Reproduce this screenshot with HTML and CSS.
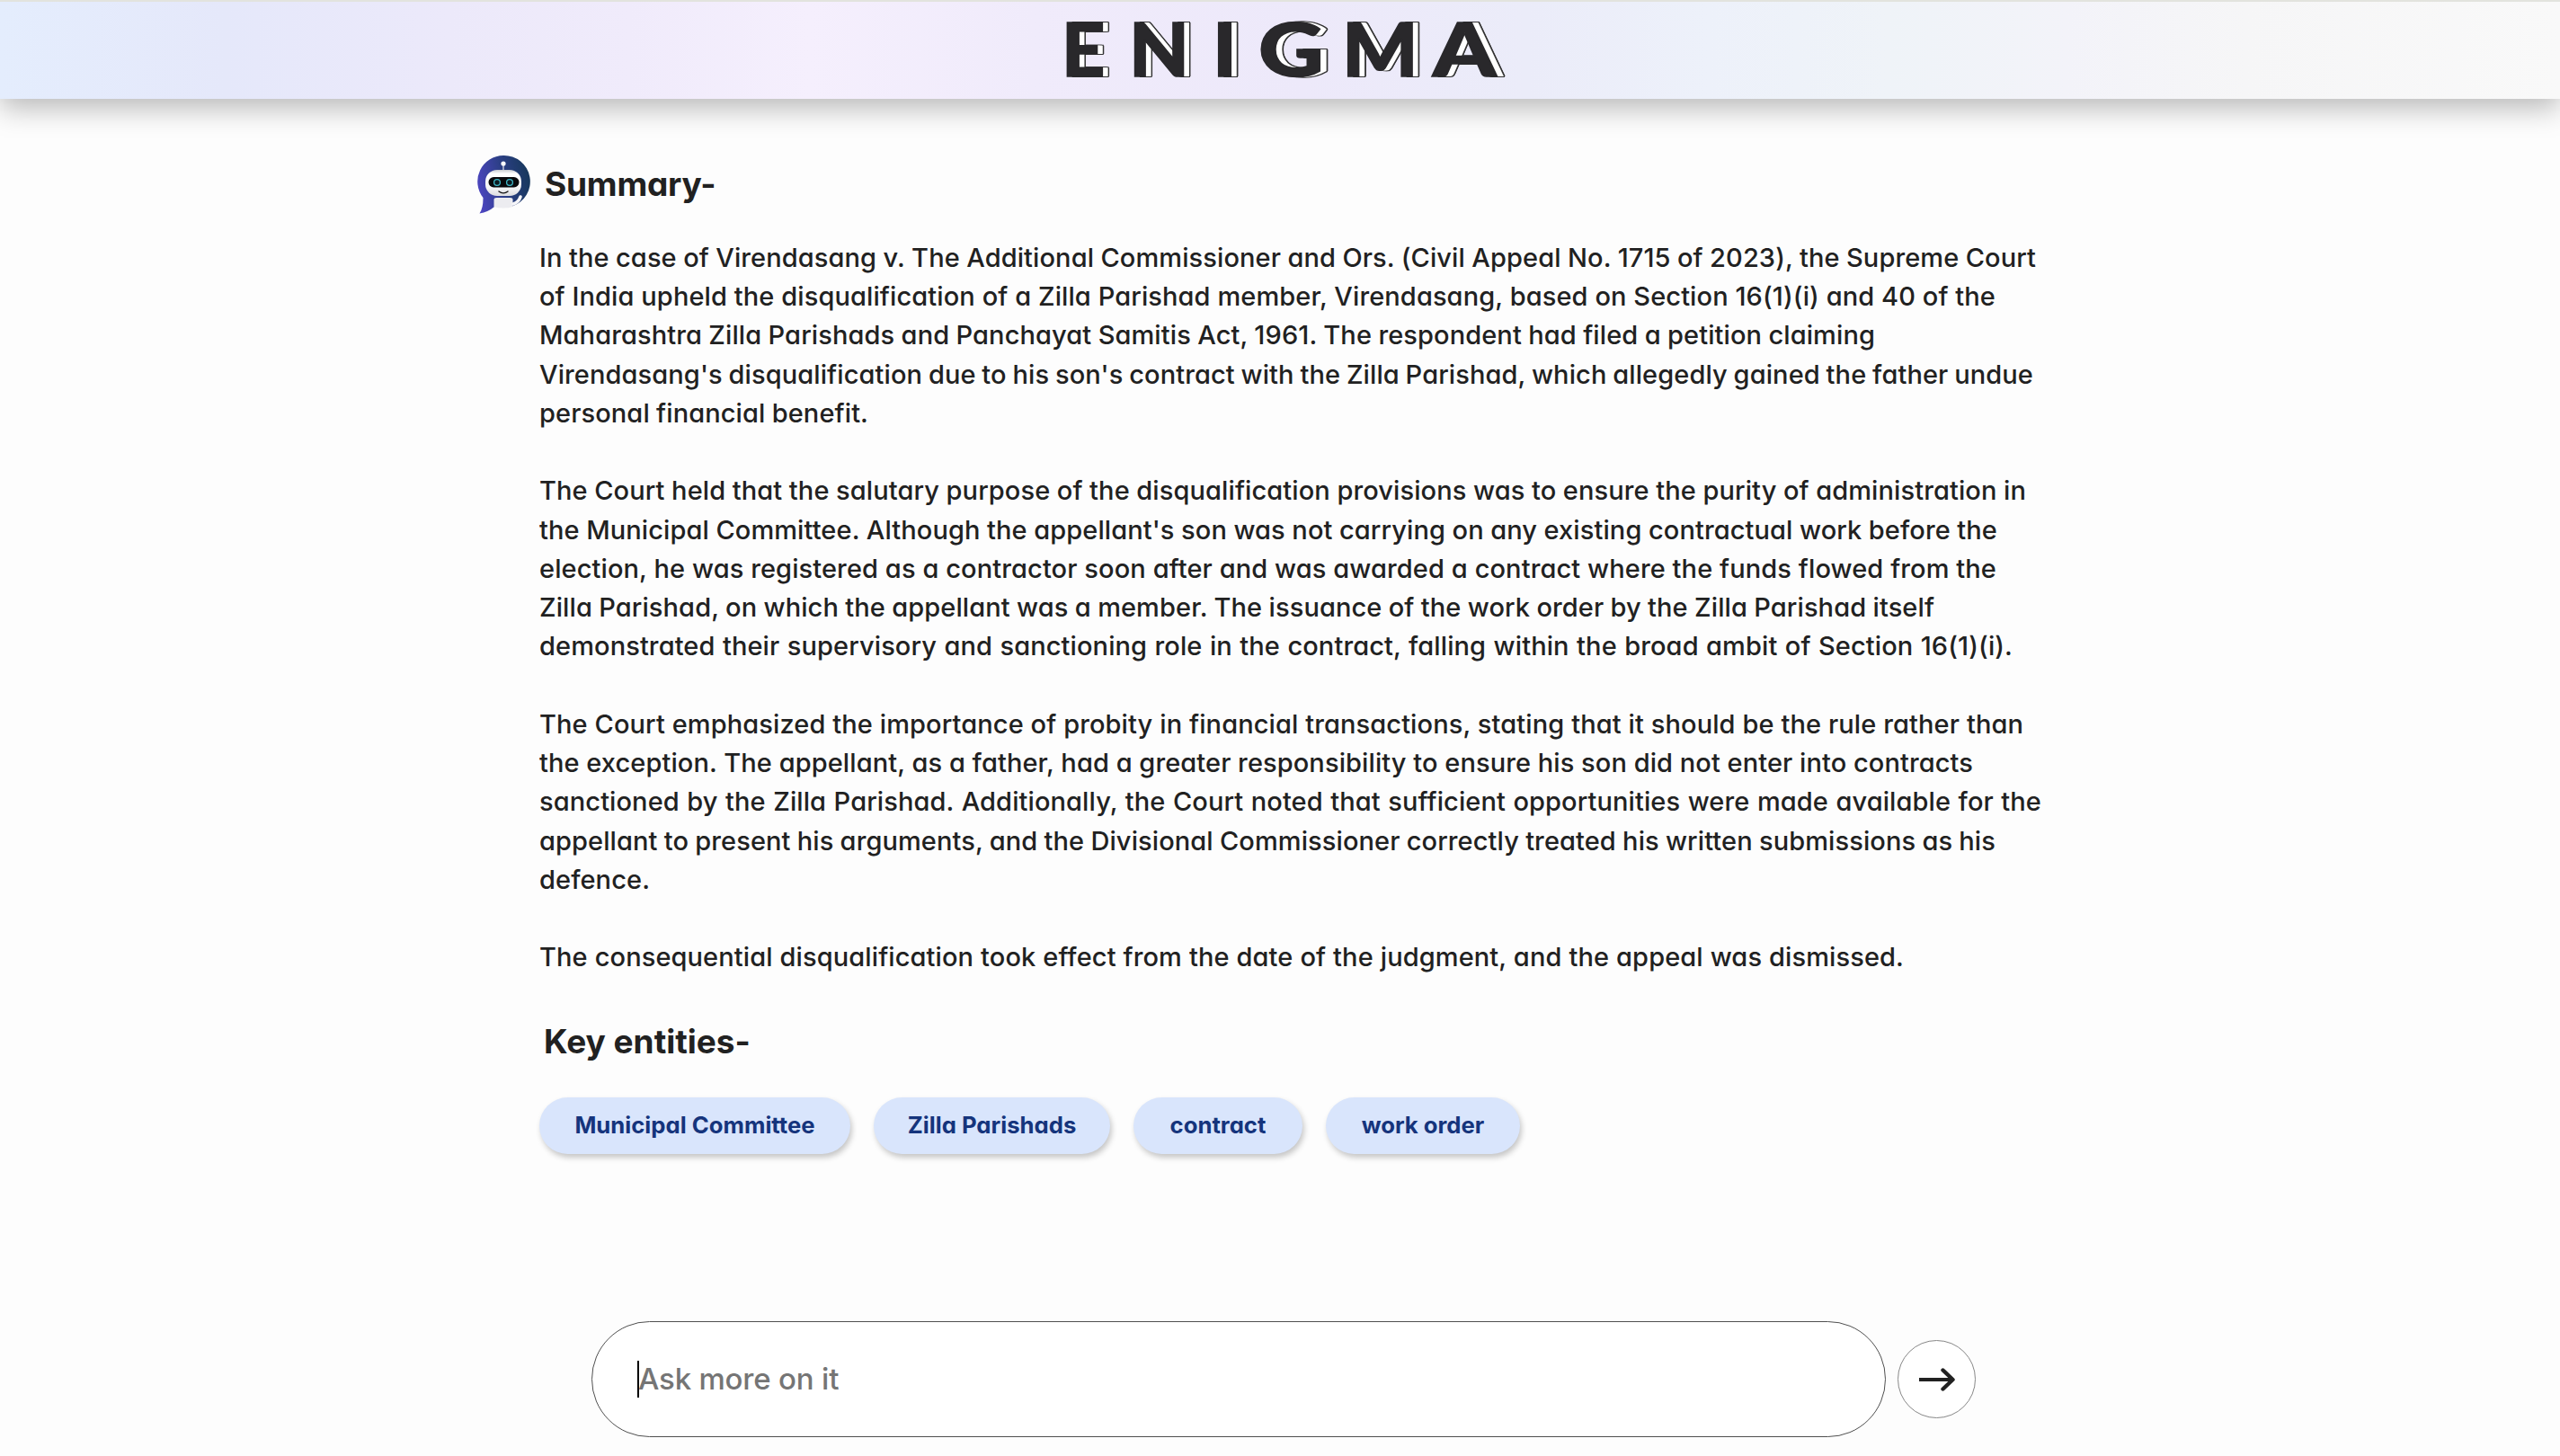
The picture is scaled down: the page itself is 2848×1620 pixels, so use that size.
FILE: index.html
```html
<!DOCTYPE html>
<html lang="en">
<head>
<meta charset="utf-8">
<title>Enigma</title>
<link rel="stylesheet" href="styles.css">
</head>
<body>
<header class="topbar">
  <div class="logo"><span class="l e">E</span><span class="l n">N</span><span class="l i">I</span><span class="l g">G</span><span class="l m">M</span><span class="l a">A</span></div>
</header>
<main class="answer">
  <div class="title-row">
    <svg class="bot" viewBox="0 0 60 66">
      <defs><linearGradient id="bubble" x1="0" x2="1" y1=".6" y2=".4"><stop offset="0" stop-color="#4c45c0"/><stop offset=".5" stop-color="#2c3f86"/><stop offset="1" stop-color="#17385c"/></linearGradient>
      <linearGradient id="face" x1="0" x2="0" y1="0" y2="1"><stop offset="0" stop-color="#c9cbd0"/><stop offset=".15" stop-color="#fff"/><stop offset=".7" stop-color="#f4f4f6"/><stop offset="1" stop-color="#dcdce0"/></linearGradient></defs>
      <path fill="url(#bubble)" d="M30 1a29 29 0 0 1 10 56.500Q32 58 20 58Q13 64 3.500 65.500Q7.500 60 7.500 48A29 29 0 0 1 30 1Z"/>
      <path stroke="#e8e8ee" stroke-width="1.200" d="M30 10v8"/><circle cx="30" cy="10" r="2.600" fill="#fff"/>
      <rect x="10" y="17" width="40" height="29" rx="13" fill="url(#face)"/>
      <rect x="13.500" y="25" width="34" height="11.500" rx="5.700" fill="#08090c"/>
      <g fill="#0b1a20" stroke="#3fb6c6" stroke-width="1.300"><circle cx="23" cy="31" r="3.400"/><circle cx="37" cy="31" r="3.400"/></g>
      <path d="M25 41q5 3.800 10 0" fill="none" stroke="#111" stroke-width="1.400" stroke-linecap="round"/>
      <path fill="#ececf0" d="M19.500 58V50q0-2 3-2h15q3 0 3 2v8q-4 1.500-10.500 1.500T19.500 58Z"/>
      <path d="M41 55q6-2 8-8" fill="none" stroke="#f5f5f8" stroke-width="3.600" stroke-linecap="round"/>
    </svg>
    <h1 class="heading">Summary-</h1>
  </div>
  <p class="para">
    <span class="line" style="--w:1665px">In the case of Virendasang v. The Additional Commissioner and Ors. (Civil Appeal No. 1715 of 2023), the Supreme Court</span>
    <span class="line" style="--w:1620px">of India upheld the disqualification of a Zilla Parishad member, Virendasang, based on Section 16(1)(i) and 40 of the</span>
    <span class="line" style="--w:1486px">Maharashtra Zilla Parishads and Panchayat Samitis Act, 1961. The respondent had filed a petition claiming</span>
    <span class="line" style="--w:1662px">Virendasang's disqualification due to his son's contract with the Zilla Parishad, which allegedly gained the father undue</span>
    <span class="line" style="--w:366px">personal financial benefit.</span>
  </p>
  <p class="para">
    <span class="line" style="--w:1654px">The Court held that the salutary purpose of the disqualification provisions was to ensure the purity of administration in</span>
    <span class="line" style="--w:1622px">the Municipal Committee. Although the appellant's son was not carrying on any existing contractual work before the</span>
    <span class="line" style="--w:1621px">election, he was registered as a contractor soon after and was awarded a contract where the funds flowed from the</span>
    <span class="line" style="--w:1552px">Zilla Parishad, on which the appellant was a member. The issuance of the work order by the Zilla Parishad itself</span>
    <span class="line" style="--w:1639px">demonstrated their supervisory and sanctioning role in the contract, falling within the broad ambit of Section 16(1)(i).</span>
  </p>
  <p class="para">
    <span class="line" style="--w:1651px">The Court emphasized the importance of probity in financial transactions, stating that it should be the rule rather than</span>
    <span class="line" style="--w:1595px">the exception. The appellant, as a father, had a greater responsibility to ensure his son did not enter into contracts</span>
    <span class="line" style="--w:1671px">sanctioned by the Zilla Parishad. Additionally, the Court noted that sufficient opportunities were made available for the</span>
    <span class="line" style="--w:1620px">appellant to present his arguments, and the Divisional Commissioner correctly treated his written submissions as his</span>
    <span class="line" style="--w:122px">defence.</span>
  </p>
  <p class="para">
    <span class="line" style="--w:1518px">The consequential disqualification took effect from the date of the judgment, and the appeal was dismissed.</span>
  </p>
  <h2 class="heading entities-title">Key entities-</h2>
  <div class="chips">
    <span class="chip c1">Municipal Committee</span>
    <span class="chip c2">Zilla Parishads</span>
    <span class="chip c3">contract</span>
    <span class="chip c4">work order</span>
  </div>
</main>
<footer class="ask">
  <div class="field"><i class="caret"></i><span class="placeholder">Ask more on it</span></div>
  <button class="send" aria-label="Send"><svg viewBox="0 0 42 28"><path d="M1 14H39" stroke="#212121" stroke-width="4"/><path d="M27.500 3.500L38.500 14L27.500 24.500" fill="none" stroke="#212121" stroke-width="4.400" stroke-linecap="round" stroke-linejoin="round"/></svg></button>
</footer>
</body>
</html>
```

FILE: styles.css
```css
* { box-sizing: border-box; }
body { margin: 0; height: 1620px; overflow: hidden; background: #fdfdfd; color: #212121; font-family: Inter, "Liberation Sans", sans-serif; font-feature-settings: "cv11"; display: flex; flex-direction: column; }
.topbar { height: 110px; flex: none; border-top: 2px solid #e2e3de; background: linear-gradient(90deg, #e4edfd 0, #e5e8fa 250px, #ece9fa 500px, #f0ebfb 700px, #f5effd 900px, #f0ebfb 1150px, #ede9fa 1450px, #ebecf9 1700px, #edf1fa 1900px, #eff3f8 2100px, #f3f3f9 2300px, #f6f6f7 2500px, #f9f9f9 2848px); box-shadow: 0 10px 30px rgba(0,0,0,.28); }
.logo { height: 104px; padding-left: 1181px; display: flex; font: 900 81px/104px Lato, sans-serif; color: #29282b; -webkit-text-stroke: 1.500px #29282b; }
.l { display: block; height: 104px; transform-origin: 0 50%; text-shadow: 3px 0 #fff, 5px 0 #fff, 6px 0 #fff, 7.500px 0 #333, 7px 1px #333, 7px -1px #333, 5px 1px #333, 5px -1px #333; }
.e { width: 75px; transform: scaleX(1.04); } .n { width: 93px; transform: scaleX(1.07); } .i { width: 51px; transform: scaleX(1.1); } .g { width: 93px; transform: scaleX(1.24); } .m { width: 101px; transform: scaleX(1.1); } .a { width: 80px; transform: scaleX(1.24); }
.answer { padding: 62px 0 0 530px; flex: none; }
.title-row { display: flex; height: 93px; align-items: flex-start; }
.bot { width: 60px; height: 66px; margin-right: 16px; }
.heading { margin: 0; font-size: 37px; line-height: 66px; font-weight: 700; letter-spacing: -.2px; }
.para { margin: 0 0 43.300px 70px; font-size: 29px; line-height: 43.240px; font-weight: 460; letter-spacing: .1px; }
.line { display: block; width: var(--w); text-align: justify; text-align-last: justify; word-spacing: -4px; height: 43.240px; }
.entities-title { padding-left: 75px; margin-top: -4px; letter-spacing: 0; }
.chips { display: flex; gap: 26px; margin: 29px 0 0 70px; }
.chip { height: 63px; border-radius: 32px; background: #d9e5fc; color: #15347c; font-size: 25.700px; font-weight: 700; line-height: 62px; text-align: center; box-shadow: 2px 4px 6px rgba(0,0,0,.22); white-space: nowrap; }
.c1 { width: 346px; } .c2 { width: 263px; } .c3 { width: 188px; } .c4 { width: 216px; }
.ask { margin-top: auto; padding: 0 0 21px 658px; display: flex; align-items: center; gap: 13px; }
.field { width: 1440px; height: 129px; border: 1px solid #505050; border-radius: 65px; background: #fff; padding-left: 50px; display: flex; align-items: center; }
.caret { width: 2px; height: 41px; background: #000; }
.placeholder { font-size: 33px; font-weight: 460; color: #757575; letter-spacing: -.2px; margin: -2px 0 0 -1px; }
.send { width: 87px; height: 87px; border: 1px solid #888; border-radius: 50%; background: #fff; padding: 0; display: grid; place-items: center; }
.send svg { width: 42px; height: 28px; }
```
